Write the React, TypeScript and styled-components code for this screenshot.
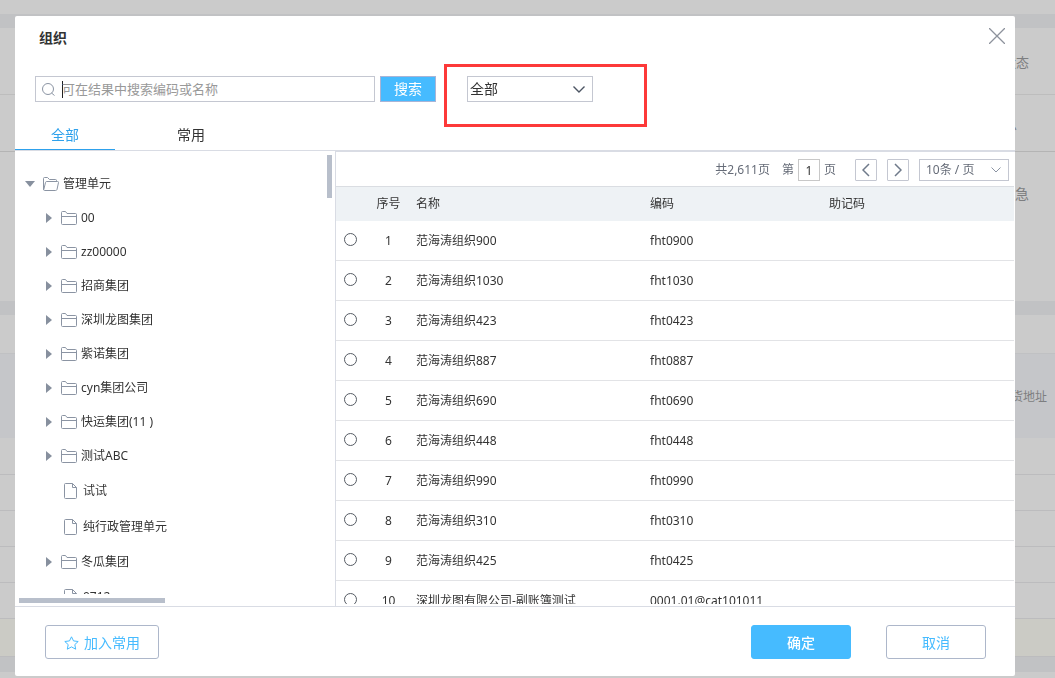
import React from "react";
import styled, { createGlobalStyle } from "styled-components";

const GlobalStyle = createGlobalStyle`
  *, *::before, *::after { box-sizing: border-box; }
  html, body, #root { height: 100%; }
  body {
    margin: 0;
    overflow: hidden;
    background: #cbcbcb;
    color: #333;
    font: 12px/18px "Noto Sans", "Noto Sans CJK SC", sans-serif;
  }
  button, input, select { font: inherit; color: inherit; margin: 0; }
`;

/* Dimmed page behind the dialog */
const Page = styled.div`
  display: flex;
  flex-direction: column;
  padding-top: 14px;
`;
const Band = styled.div<{ $h: number; $bg?: string; $line?: string; $end?: number; $size?: number }>`
  display: flex;
  align-items: center;
  justify-content: flex-end;
  height: ${(p) => p.$h}px;
  padding-top: 2px;
  padding-right: ${(p) => p.$end ?? 0}px;
  background: ${(p) => p.$bg ?? "#cbcbcb"};
  border-bottom: ${(p) => (p.$line ? `1px solid ${p.$line}` : "0")};
  color: #7d7e80;
  font-size: ${(p) => p.$size ?? 12}px;
`;
const FormArea = styled(Band)`
  align-items: flex-start;
  padding-top: 33px;
`;

const Overlay = styled.div`
  position: fixed;
  inset: 0;
  display: flex;
  padding: 16px 40px 2px 15px;
`;
const Dialog = styled.section`
  flex: 1;
  min-width: 0;
  display: flex;
  flex-direction: column;
  background: #fff;
  border-radius: 2px;
`;
const Header = styled.header`
  display: flex;
  justify-content: space-between;
  align-items: flex-start;
  padding: 12px 10px 0 24px;
`;
const Title = styled.h1`
  margin: 0;
  font-size: 14px;
  line-height: 20px;
  font-weight: 700;
`;
const IconButton = styled.button`
  display: flex;
  padding: 0;
  border: 0;
  background: none;
`;
const SearchBar = styled.form`
  display: flex;
  gap: 5px;
  padding: 28px 20px 0;
`;
const SearchField = styled.label`
  display: flex;
  align-items: center;
  gap: 7px;
  width: 340px;
  height: 26px;
  padding: 0 6px;
  border: 1px solid #c4c7d1;
  font-size: 13px;
`;
const SearchInput = styled.input`
  flex: 1;
  min-width: 0;
  height: 20px;
  padding: 0;
  border: 0;
  outline: 0;
  background: none;
  &::placeholder { color: #999; opacity: 1; }
`;
const Caret = styled.span`
  width: 1px;
  height: 17px;
  margin-right: -8px;
  background: #222;
`;
const SearchButton = styled.button`
  width: 56px;
  height: 26px;
  padding: 0;
  border: 1px solid #a9b4d6;
  background: #46bbff;
  color: #fff;
  font-size: 14px;
`;
const ScopeBox = styled.div`
  position: relative;
  margin-left: 26px;
`;
const Highlight = styled.span`
  position: absolute;
  inset: -12px -54px -25px -23px;
  border: 3px solid #fd3939;
  pointer-events: none;
`;
const SelectWrap = styled.div<{ $w: number; $h: number }>`
  position: relative;
  display: flex;
  align-items: center;
  width: ${(p) => p.$w}px;
  height: ${(p) => p.$h}px;
  border: 1px solid #c4c7d1;
`;
const Select = styled.select<{ $pad: number; $size: number }>`
  appearance: none;
  width: 100%;
  height: 100%;
  padding: 0 24px 0 ${(p) => p.$pad}px;
  border: 0;
  outline: 0;
  background: none;
  font-size: ${(p) => p.$size}px;
`;
const SelectArrow = styled.svg`
  position: absolute;
  right: 7px;
  pointer-events: none;
`;

const Tabs = styled.nav`
  display: flex;
  gap: 26px;
  margin-top: 17px;
  border-bottom: 1px solid #d9dce4;
`;
const Tab = styled.button<{ $on?: boolean }>`
  width: 100px;
  height: 31px;
  padding: 2px 0 0;
  border: 0;
  border-bottom: 1px solid ${(p) => (p.$on ? "#2ea1ec" : "transparent")};
  background: none;
  color: ${(p) => (p.$on ? "#2ea1ec" : "#333")};
  font-size: 14px;
`;

const Body = styled.div`
  flex: 1;
  min-height: 0;
  display: flex;
`;
const TreePane = styled.aside`
  width: 320px;
  display: grid;
  grid-template-columns: 1fr 8px;
  grid-template-rows: minmax(0, 1fr) 12px;
`;
const Tree = styled.ul`
  margin: 0;
  padding: 16px 0 0 10px;
  list-style: none;
  overflow: hidden;
`;
const TreeItem = styled.li<{ $kind: string }>`
  display: flex;
  align-items: center;
  gap: ${(p) => (p.$kind === "file" ? 6 : 4)}px;
  height: ${(p) => (p.$kind === "file" ? 36 : 34)}px;
  padding-left: ${(p) => (p.$kind === "root" ? 0 : p.$kind === "file" ? 39 : 18)}px;
  white-space: nowrap;
`;
const Toggle = styled(IconButton)`
  width: 14px;
`;
const VThumb = styled.div`
  width: 5px;
  height: 43px;
  margin-top: 4px;
  background: #b8bfcb;
`;
const HThumb = styled.div`
  width: 146px;
  height: 5px;
  margin: 4px 0 0 4px;
  background: #b8bfcb;
`;

const ListPane = styled.main`
  flex: 1;
  min-width: 0;
  display: flex;
  flex-direction: column;
  border-left: 1px solid #d9dce4;
  border-top: 1px solid #d9dce4;
`;
const Pager = styled.div`
  display: flex;
  align-items: center;
  justify-content: flex-end;
  height: 34px;
  padding-right: 6px;
  padding-top: 2px;
  color: #666c78;
`;
const PageLabel = styled.label`
  display: flex;
  align-items: center;
  gap: 4px;
  margin: 0 19px 0 12px;
`;
const PageInput = styled.input`
  width: 22px;
  height: 22px;
  padding: 0;
  border: 1px solid #c8c8c8;
  text-align: center;
  color: #333;
`;
const PageButton = styled.button`
  display: flex;
  align-items: center;
  justify-content: center;
  width: 22px;
  height: 22px;
  margin-right: 10px;
  padding: 0;
  border: 1px solid #c4c7d1;
  border-radius: 1px;
  background: #fff;
`;
const TableClip = styled.div`
  flex: 1;
  min-height: 0;
  margin: 0 1px 2px 0;
  overflow: hidden;
`;
const Table = styled.table`
  width: 100%;
  table-layout: fixed;
  border-spacing: 0;
  th, td { padding: 0; text-align: left; font-weight: 400; white-space: nowrap; }
  th { height: 35px; background: #eef2f5; border-top: 1px solid #dadde2; }
  td { height: 40px; border-bottom: 1px solid #e2e3e6; }
  th:nth-child(2), td:nth-child(2) { text-align: center; }
  th:nth-child(3), td:nth-child(3) { padding-left: 5px; }
`;
const Radio = styled.input`
  appearance: none;
  display: block;
  width: 13px;
  height: 13px;
  margin: 0 0 2px 8px;
  border: 1px solid #555b63;
  border-radius: 50%;
  background: #fff;
`;

const Footer = styled.footer`
  display: flex;
  align-items: center;
  height: 70px;
  padding: 1px 29px 0 30px;
  border-top: 1px solid #d9dce4;
`;
const Button = styled.button<{ $primary?: boolean }>`
  display: flex;
  align-items: center;
  justify-content: center;
  gap: 5px;
  min-width: 100px;
  height: 34px;
  padding: 2px 17px 0;
  border: 1px solid ${(p) => (p.$primary ? "#46bbff" : "#adb7ca")};
  border-radius: 3px;
  background: ${(p) => (p.$primary ? "#46bbff" : "#fff")};
  color: ${(p) => (p.$primary ? "#fff" : "#46bbff")};
  font-size: 14px;
  font-weight: ${(p) => (p.$primary ? 500 : 400)};
`;
const FavoriteButton = styled(Button)`
  min-width: 114px;
`;
const Actions = styled.div`
  display: flex;
  gap: 35px;
  margin-left: auto;
`;

const Chevron = ({ d }: { d: string }) => (
  <svg width="8" height="14" viewBox="0 0 8 14" fill="none" stroke="#6f7a8a" strokeWidth="1.5">
    <path d={d} />
  </svg>
);
const FolderIcon = () => (
  <svg width="16" height="14" viewBox="0 0 16 14" fill="none" stroke="#8b94a3">
    <path d="M.5 12.500V1.500Q.5.5 1.500.5H4.500L6 2.500H14.500Q15.500 2.500 15.500 3.500V12.500Q15.500 13.500 14.500 13.500H1.500Q.5 13.500.5 12.500M.5 5.500H15.500" />
  </svg>
);
const OpenFolderIcon = () => (
  <svg width="16" height="14" viewBox="0 0 16 14" fill="none" stroke="#8b94a3">
    <path d="M.5 12V1.500Q.5.5 1.500.5H4.500L6.500 2.500H12.500Q13.500 2.500 13.500 3.500V4.500M.8 12.500 2.500 5.500Q2.700 4.500 3.700 4.500H14.500Q15.700 4.500 15.500 5.500L14 12.500Q13.700 13.500 12.500 13.500H1.500Q.5 13.500.5 12" />
  </svg>
);
const FileIcon = () => (
  <svg width="13" height="16" viewBox="0 0 13 16" fill="none" stroke="#8b94a3">
    <path d="M1.500.5H8.500L12.500 4.500V14.500Q12.500 15.500 11.500 15.500H1.500Q.5 15.500.5 14.500V1.500Q.5.5 1.500.5M8.500.5V4.500H12.500" />
  </svg>
);

const treeItems: [string, string][] = [
  ["root", "管理单元"],
  ["folder", "00"],
  ["folder", "zz00000"],
  ["folder", "招商集团"],
  ["folder", "深圳龙图集团"],
  ["folder", "紫诺集团"],
  ["folder", "cyn集团公司"],
  ["folder", "快运集团(11 )"],
  ["folder", "测试ABC"],
  ["file", "试试"],
  ["file", "纯行政管理单元"],
  ["folder", "冬瓜集团"],
  ["file", "0712"],
];

const rows: [string, string][] = [
  ["范海涛组织900", "fht0900"],
  ["范海涛组织1030", "fht1030"],
  ["范海涛组织423", "fht0423"],
  ["范海涛组织887", "fht0887"],
  ["范海涛组织690", "fht0690"],
  ["范海涛组织448", "fht0448"],
  ["范海涛组织990", "fht0990"],
  ["范海涛组织310", "fht0310"],
  ["范海涛组织425", "fht0425"],
  ["深圳龙图有限公司-副账簿测试", "0001.01@cat101011"],
];

export default function App() {
  return (
    <>
      <GlobalStyle />
      <Page>
        <Band $h={14} $bg="#c1c2c4" />
        <Band $h={67} $line="#bdbdbd" $end={26} $size={13}>状态</Band>
        <Band $h={57} $line="#b4b4b4" $end={38} $size={13}>信息</Band>
        <FormArea $h={149} $end={26} $size={14}>急</FormArea>
        <Band $h={14} $bg="#c1c2c4" />
        <Band $h={39} $line="#c0c1c3" />
        <Band $h={84} $bg="#c5c6c9" $end={8}>收货地址</Band>
        <Band $h={37} $line="#bcbcbe" />
        <Band $h={36} $line="#bcbcbe" />
        <Band $h={36} $line="#bcbcbe" />
        <Band $h={36} $line="#bcbcbe" />
        <Band $h={36} $line="#bcbcbe" />
        <Band $h={38} $bg="#cbcbc5" $line="#bcbcbe" />
        <Band $h={15} $bg="#c1c2c4" />
      </Page>
      <Overlay>
        <Dialog role="dialog" aria-labelledby="dialog-title">
          <Header>
            <Title id="dialog-title">组织</Title>
            <IconButton aria-label="关闭">
              <svg width="16" height="16" viewBox="0 0 16 16" stroke="#8d929c" strokeWidth="1.300">
                <path d="M0 0 16 16M16 0 0 16" />
              </svg>
            </IconButton>
          </Header>
          <SearchBar onSubmit={(e) => e.preventDefault()}>
            <SearchField>
              <svg width="13" height="14" viewBox="0 0 13 14" fill="none" stroke="#8b94a3">
                <circle cx="6" cy="7" r="5.500" />
                <path d="M9.500 11 12.500 13.500" />
              </svg>
              <Caret />
              <SearchInput aria-label="搜索" placeholder="可在结果中搜索编码或名称" />
            </SearchField>
            <SearchButton>搜索</SearchButton>
            <ScopeBox>
              <SelectWrap $w={126} $h={26}>
                <Select $pad={2} $size={14} aria-label="范围">
                  <option>全部</option>
                </Select>
                <SelectArrow width="12" height="7" viewBox="0 0 12 7" fill="none" stroke="#4c5563" strokeWidth="1.400">
                  <path d="M.5.5 6 6 11.500.5" />
                </SelectArrow>
              </SelectWrap>
              <Highlight />
            </ScopeBox>
          </SearchBar>
          <Tabs>
            <Tab $on>全部</Tab>
            <Tab>常用</Tab>
          </Tabs>
          <Body>
            <TreePane>
              <Tree>
                {treeItems.map(([kind, name]) => (
                  <TreeItem key={name} $kind={kind}>
                    {kind === "root" && (
                      <Toggle aria-label="收起">
                        <svg width="10" height="6" viewBox="0 0 10 6" fill="#87909e"><path d="M0 0H10L5 6Z" /></svg>
                      </Toggle>
                    )}
                    {kind === "folder" && (
                      <Toggle aria-label="展开">
                        <svg width="10" height="10" viewBox="0 0 10 10" fill="#87909e"><path d="M3 0 9 5 3 10Z" /></svg>
                      </Toggle>
                    )}
                    {kind === "root" ? <OpenFolderIcon /> : kind === "folder" ? <FolderIcon /> : <FileIcon />}
                    <span>{name}</span>
                  </TreeItem>
                ))}
              </Tree>
              <VThumb />
              <HThumb />
            </TreePane>
            <ListPane>
              <Pager>
                <span>共2,611页</span>
                <PageLabel>
                  第
                  <PageInput defaultValue="1" />
                  页
                </PageLabel>
                <PageButton aria-label="上一页">
                  <Chevron d="M7 1 1 7 7 13" />
                </PageButton>
                <PageButton aria-label="下一页">
                  <Chevron d="M1 1 7 7 1 13" />
                </PageButton>
                <SelectWrap $w={90} $h={22}>
                  <Select $pad={6} $size={12} aria-label="每页条数">
                    <option>10条 / 页</option>
                  </Select>
                  <SelectArrow width="10" height="6" viewBox="0 0 10 6" fill="none" stroke="#8b94a3">
                    <path d="M.5.5 5 5 9.500.5" />
                  </SelectArrow>
                </SelectWrap>
              </Pager>
              <TableClip>
                <Table>
                  <colgroup>
                    <col width="30" />
                    <col width="45" />
                    <col width="239" />
                    <col width="179" />
                    <col />
                  </colgroup>
                  <thead>
                    <tr>
                      <th />
                      <th>序号</th>
                      <th>名称</th>
                      <th>编码</th>
                      <th>助记码</th>
                    </tr>
                  </thead>
                  <tbody>
                    {rows.map(([name, code], i) => (
                      <tr key={code}>
                        <td><Radio type="radio" name="org" aria-label={name} /></td>
                        <td>{i + 1}</td>
                        <td>{name}</td>
                        <td>{code}</td>
                        <td />
                      </tr>
                    ))}
                  </tbody>
                </Table>
              </TableClip>
            </ListPane>
          </Body>
          <Footer>
            <FavoriteButton>
              <svg width="15" height="14" viewBox="0 0 15 14" fill="none" stroke="#46bbff" strokeLinejoin="round">
                <path d="M7.500.8 9.500 4.900 14.200 5.500 10.800 8.600 11.700 13.200 7.500 10.900 3.300 13.200 4.200 8.600.8 5.500 5.500 4.900Z" />
              </svg>
              加入常用
            </FavoriteButton>
            <Actions>
              <Button $primary>确定</Button>
              <Button>取消</Button>
            </Actions>
          </Footer>
        </Dialog>
      </Overlay>
    </>
  );
}
